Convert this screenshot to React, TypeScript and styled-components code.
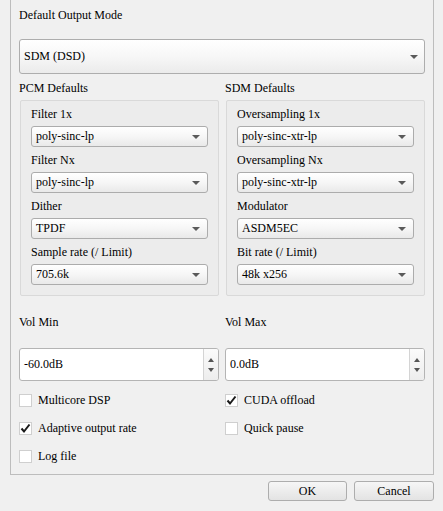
import React from 'react';
import styled, { createGlobalStyle, css } from 'styled-components';

const GlobalStyle = createGlobalStyle`
  html, body {
    margin: 0;
    padding: 0;
    background: #f0f0f0;
  }
`

const serif = css`
  font-family: ${"'Liberation Serif'"}, serif;
  font-size: 12px;
  color: #000;
`

const Page = styled.div`
  width: 443px;
  height: 511px;
  box-sizing: border-box;
  display: flex;
  flex-direction: column;
  background: #f0f0f0;
  ${serif}
`

const Pane = styled.div`
  margin-left: 10px;
  width: 424px;
  height: 475px;
  box-sizing: border-box;
  border: 1px solid #bdbdbd;
  border-top: none;
  padding: 5px 8px 0 8px;
  display: flex;
  flex-direction: column;
`

const Label = styled.div`
  ${serif}
  height: 20px;
  line-height: 20px;
  white-space: nowrap;
`

const Value = styled.span`
  ${serif}
`

const TopCombo = styled.div`
  margin-top: 14px;
  height: 35px;
  box-sizing: border-box;
  border: 1px solid #adadad;
  border-radius: 3px;
  background: linear-gradient(#ffffff, #f7f7f7 50%, #ebebeb);
  display: flex;
  align-items: center;
  padding: 0 6px 0 4px;
  justify-content: space-between;
`

const Columns = styled.div<{ $top?: number }>`
  display: grid;
  grid-template-columns: 200px 200px;
  column-gap: 6px;
  margin-top: ${p => p.$top ?? 0}px;
`

const GroupTitle = styled(Label)`
  margin-top: 4px;
`

const GroupBox = styled.div`
  margin-left: 1px;
  margin-top: 2px;
  width: 199px;
  box-sizing: border-box;
  border: 1px solid #d9d9d9;
  border-radius: 2px;
  background: #ececec;
  padding: 3px 10px 10px 10px;
  display: flex;
  flex-direction: column;
  gap: 3px;
`

const Field = styled.div`
  display: flex;
  flex-direction: column;
  gap: 2px;
`

const Combo = styled.div`
  height: 21px;
  box-sizing: border-box;
  border: 1px solid #acacac;
  border-radius: 3px;
  background: linear-gradient(#ffffff, #f6f6f6 50%, #e9e9e9);
  display: flex;
  align-items: center;
  justify-content: space-between;
  padding: 0 7px 0 4px;
`

const Arrow = styled.span`
  width: 0;
  height: 0;
  border-left: 4px solid transparent;
  border-right: 4px solid transparent;
  border-top: 4px solid #5a5a5a;
`

const SpinBox = styled.div`
  margin-top: 16px;
  height: 33px;
  box-sizing: border-box;
  border: 1px solid #b4b4b4;
  border-radius: 3px;
  background: #ffffff;
  display: flex;
`

const SpinText = styled.div`
  ${serif}
  flex: 1;
  display: flex;
  align-items: center;
  padding-left: 4px;
`

const SpinButtons = styled.div`
  width: 14px;
  border-left: 1px solid #d4d4d4;
  background: linear-gradient(#fbfbfb, #ededed);
  border-radius: 0 2px 2px 0;
  display: flex;
  flex-direction: column;
  align-items: center;
  justify-content: center;
  gap: 6px;
`

const SpinArrow = styled.span<{ $up?: boolean }>`
  width: 0;
  height: 0;
  border-left: 3px solid transparent;
  border-right: 3px solid transparent;
  ${p => p.$up ? 'border-bottom: 4px solid #555;' : 'border-top: 4px solid #555;'}
`

const CheckList = styled.div`
  margin-top: 9px;
  display: flex;
  flex-direction: column;
  gap: 8px;
`

const CheckRow = styled.div`
  height: 20px;
  display: flex;
  align-items: center;
  gap: 6px;
`

const Box = styled.span`
  width: 13px;
  height: 13px;
  box-sizing: border-box;
  border: 1px solid #cfcfcf;
  background: #ffffff;
  display: flex;
  align-items: center;
  justify-content: center;
`

const Footer = styled.div`
  display: flex;
  justify-content: flex-end;
  gap: 7px;
  padding: 6px 9px 0 0;
`

const Button = styled.div<{ $w: number }>`
  ${serif}
  width: ${p => p.$w}px;
  height: 20px;
  box-sizing: border-box;
  border: 1px solid #adadad;
  border-radius: 3px;
  background: linear-gradient(#f6f6f6, #e3e3e3);
  display: flex;
  align-items: center;
  justify-content: center;
`

const Check = ({ checked, label }: { checked?: boolean, label: string }) => (
  <CheckRow>
    <Box>
      {checked && (
        <svg width="11" height="11" viewBox="0 0 11 11">
          <path d="M1.5 5.5 L4 8.5 L9.5 1.5" stroke="#1a1a1a" strokeWidth="2" fill="none" />
        </svg>
      )}
    </Box>
    <Value>{label}</Value>
  </CheckRow>
)

const Select = ({ label, value }: { label: string, value: string }) => (
  <Field>
    <Label>{label}</Label>
    <Combo>
      <Value>{value}</Value>
      <Arrow />
    </Combo>
  </Field>
)

const Spin = ({ label, value }: { label: string, value: string }) => (
  <div>
    <Label>{label}</Label>
    <SpinBox>
      <SpinText>{value}</SpinText>
      <SpinButtons>
        <SpinArrow $up />
        <SpinArrow />
      </SpinButtons>
    </SpinBox>
  </div>
)

const App: React.FC = () => {
  return (
    <Page>
      <GlobalStyle />
      <Pane>
        <Label>Default Output Mode</Label>
        <TopCombo>
          <Value>SDM (DSD)</Value>
          <Arrow />
        </TopCombo>
        <Columns>
          <div>
            <GroupTitle>PCM Defaults</GroupTitle>
            <GroupBox>
              <Select label="Filter 1x" value="poly-sinc-lp" />
              <Select label="Filter Nx" value="poly-sinc-lp" />
              <Select label="Dither" value="TPDF" />
              <Select label="Sample rate (/ Limit)" value="705.6k" />
            </GroupBox>
          </div>
          <div>
            <GroupTitle>SDM Defaults</GroupTitle>
            <GroupBox>
              <Select label="Oversampling 1x" value="poly-sinc-xtr-lp" />
              <Select label="Oversampling Nx" value="poly-sinc-xtr-lp" />
              <Select label="Modulator" value="ASDM5EC" />
              <Select label="Bit rate (/ Limit)" value="48k x256" />
            </GroupBox>
          </div>
        </Columns>
        <Columns $top={16}>
          <div>
            <Spin label="Vol Min" value="-60.0dB" />
            <CheckList>
              <Check label="Multicore DSP" />
              <Check checked label="Adaptive output rate" />
              <Check label="Log file" />
            </CheckList>
          </div>
          <div>
            <Spin label="Vol Max" value="0.0dB" />
            <CheckList>
              <Check checked label="CUDA offload" />
              <Check label="Quick pause" />
            </CheckList>
          </div>
        </Columns>
      </Pane>
      <Footer>
        <Button $w={79}>OK</Button>
        <Button $w={80}>Cancel</Button>
      </Footer>
    </Page>
  )
}

export default App;
